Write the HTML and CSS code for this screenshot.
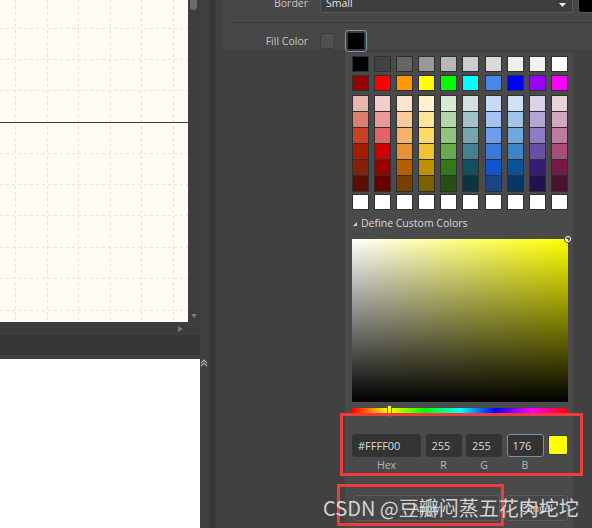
FILE: index.html
```html
<!DOCTYPE html>
<html>
<head>
<meta charset="utf-8">
<link rel="stylesheet" href="styles.css">
</head>
<body>
<div class="app">
  <div class="left">
    <div class="canvas-row">
      <svg class="canvas" width="188" height="322" viewBox="0 0 188 322">
        <rect width="188" height="322" fill="#fffcf6"/>
        <g stroke="#e9e4d9" stroke-width="1" stroke-dasharray="3 3">
          <line x1="15.5" y1="0" x2="15.5" y2="322"/>
          <line x1="47.5" y1="0" x2="47.5" y2="322"/>
          <line x1="78.5" y1="0" x2="78.5" y2="322"/>
          <line x1="110.5" y1="0" x2="110.5" y2="322"/>
          <line x1="141.5" y1="0" x2="141.5" y2="322"/>
          <line x1="173.5" y1="0" x2="173.5" y2="322"/>
          <line x1="0" y1="28.5" x2="188" y2="28.5"/>
          <line x1="0" y1="59.5" x2="188" y2="59.5"/>
          <line x1="0" y1="90.5" x2="188" y2="90.5"/>
          <line x1="0" y1="153.5" x2="188" y2="153.5"/>
          <line x1="0" y1="184.5" x2="188" y2="184.5"/>
          <line x1="0" y1="215.5" x2="188" y2="215.5"/>
          <line x1="0" y1="247.5" x2="188" y2="247.5"/>
          <line x1="0" y1="278.5" x2="188" y2="278.5"/>
          <line x1="0" y1="310.5" x2="188" y2="310.5"/>
        </g>
        <line x1="0" y1="122.5" x2="188" y2="122.5" stroke="#3c3c3c" stroke-width="1"/>
      </svg>
      <div class="vscroll">
        <div class="thumb"></div>
        <div class="arrow-down"></div>
      </div>
    </div>
    <div class="hscroll"><span class="arrow-right"></span></div>
    <div class="tabbar"></div>
    <div class="doc"></div>
  </div>
  <div class="collapse-strip">
    <svg class="chev" width="8" height="8" viewBox="0 0 8 8">
      <polyline points="1,4 4,1 7,4" fill="none" stroke="#a8a8a8" stroke-width="1.2"/>
      <polyline points="1,7 4,4 7,7" fill="none" stroke="#a8a8a8" stroke-width="1.2"/>
    </svg>
  </div>
  <div class="splitter"></div>
  <div class="panel">
    <div class="props">
      <div class="prop-row border-row">
        <span class="label">Border</span>
        <div class="dropdown">
          <span>Small</span>
          <svg class="dd-arrow" width="7" height="4" viewBox="0 0 7 4"><polygon points="0,0 7,0 3.5,4" fill="#f0f0f0"/></svg>
        </div>
        <div class="border-swatch"></div>
      </div>
      <div class="sep"></div>
      <div class="prop-row fill-row">
        <span class="label">Fill Color</span>
        <div class="swatch-empty"></div>
        <div class="swatch-selected"><div class="inner"></div></div>
      </div>
    </div>
  </div>
</div>

<div class="picker">
  <div class="sw-row r1">
    <div class="sw" style="background:#000000"></div>
    <div class="sw" style="background:#434343"></div>
    <div class="sw" style="background:#666666"></div>
    <div class="sw" style="background:#999999"></div>
    <div class="sw" style="background:#b7b7b7"></div>
    <div class="sw" style="background:#cccccc"></div>
    <div class="sw" style="background:#d9d9d9"></div>
    <div class="sw" style="background:#efefef"></div>
    <div class="sw" style="background:#f3f3f3"></div>
    <div class="sw" style="background:#ffffff"></div>
  </div>
  <div class="sw-row r2">
    <div class="sw" style="background:#990000"></div>
    <div class="sw" style="background:#ff0000"></div>
    <div class="sw" style="background:#ff9900"></div>
    <div class="sw" style="background:#ffff00"></div>
    <div class="sw" style="background:#00ff00"></div>
    <div class="sw" style="background:#00ffff"></div>
    <div class="sw" style="background:#4a86e8"></div>
    <div class="sw" style="background:#0000ff"></div>
    <div class="sw" style="background:#9900ff"></div>
    <div class="sw" style="background:#ff00ff"></div>
  </div>
  <div class="sw-row shades">
    <div class="col"><i style="background:#e6b8af"></i><i style="background:#dd7e6b"></i><i style="background:#cc4125"></i><i style="background:#a61c00"></i><i style="background:#85200c"></i><i style="background:#5b0f00"></i></div>
    <div class="col"><i style="background:#f4cccc"></i><i style="background:#ea9999"></i><i style="background:#e06666"></i><i style="background:#cc0000"></i><i style="background:#990000"></i><i style="background:#660000"></i></div>
    <div class="col"><i style="background:#fce5cd"></i><i style="background:#f9cb9c"></i><i style="background:#f6b26b"></i><i style="background:#e69138"></i><i style="background:#b45f06"></i><i style="background:#783f04"></i></div>
    <div class="col"><i style="background:#fff2cc"></i><i style="background:#ffe599"></i><i style="background:#ffd966"></i><i style="background:#f1c232"></i><i style="background:#bf9000"></i><i style="background:#7f6000"></i></div>
    <div class="col"><i style="background:#d9ead3"></i><i style="background:#b6d7a8"></i><i style="background:#93c47d"></i><i style="background:#6aa84f"></i><i style="background:#38761d"></i><i style="background:#274e13"></i></div>
    <div class="col"><i style="background:#d0e0e3"></i><i style="background:#a2c4c9"></i><i style="background:#76a5af"></i><i style="background:#45818e"></i><i style="background:#134f5c"></i><i style="background:#0c343d"></i></div>
    <div class="col"><i style="background:#c9daf8"></i><i style="background:#a4c2f4"></i><i style="background:#6d9eeb"></i><i style="background:#3c78d8"></i><i style="background:#1155cc"></i><i style="background:#1c4587"></i></div>
    <div class="col"><i style="background:#cfe2f3"></i><i style="background:#9fc5e8"></i><i style="background:#6fa8dc"></i><i style="background:#3d85c6"></i><i style="background:#0b5394"></i><i style="background:#073763"></i></div>
    <div class="col"><i style="background:#d9d2e9"></i><i style="background:#b4a7d6"></i><i style="background:#8e7cc3"></i><i style="background:#674ea7"></i><i style="background:#351c75"></i><i style="background:#20124d"></i></div>
    <div class="col"><i style="background:#ead1dc"></i><i style="background:#d5a6bd"></i><i style="background:#c27ba0"></i><i style="background:#a64d79"></i><i style="background:#741b47"></i><i style="background:#4c1130"></i></div>
  </div>
  <div class="sw-row r-last">
    <div class="sw white"></div><div class="sw white"></div><div class="sw white"></div><div class="sw white"></div><div class="sw white"></div>
    <div class="sw white"></div><div class="sw white"></div><div class="sw white"></div><div class="sw white"></div><div class="sw white"></div>
  </div>
  <div class="custom-head">
    <svg class="tri" width="4" height="4" viewBox="0 0 4 4"><polygon points="4,0 4,4 0,4" fill="#d0d0d0"/></svg>
    <span>Define Custom Colors</span>
  </div>
  <div class="sv-box">
    <span class="sv-marker"></span>
  </div>
  <div class="hue">
    <span class="hue-thumb"></span>
  </div>
  <div class="fields">
    <div class="field">
      <div class="input hex">#FFFF00</div>
      <span class="flabel">Hex</span>
    </div>
    <div class="field">
      <div class="input num">255</div>
      <span class="flabel">R</span>
    </div>
    <div class="field">
      <div class="input num g">255</div>
      <span class="flabel">G</span>
    </div>
    <div class="field">
      <div class="input num b focus">176</div>
      <span class="flabel">B</span>
    </div>
    <div class="preview"></div>
  </div>
  <div class="buttons">
    <div class="btn wide">Apply</div>
    <div class="btn narrow">Cancel</div>
  </div>
</div>

<div class="annot box1"></div>
<div class="annot box2"></div>
<div class="watermark">CSDN @豆瓣闷蒸五花肉坨坨</div>
</body>
</html>
```

FILE: styles.css
```css
* { box-sizing: border-box; }

html, body {
  margin: 0;
  padding: 0;
}

body {
  width: 592px;
  height: 528px;
  overflow: hidden;
  position: relative;
  background: #414141;
  font-family: "Open Sans", "Noto Sans", sans-serif;
  font-size: 10.5px;
  color: #d6d6d6;
}

.app {
  display: flex;
  width: 592px;
  height: 528px;
}

/* ---------- left ---------- */
.left {
  flex: none;
  width: 200px;
  display: flex;
  flex-direction: column;
  background: #3d3d3d;
}

.canvas-row {
  display: flex;
  height: 322px;
  flex: none;
}

.canvas {
  display: block;
  flex: none;
  width: 188px;
  height: 322px;
}

.vscroll {
  flex: none;
  width: 12px;
  background: #3d3d3d;
  display: flex;
  flex-direction: column;
}

.thumb {
  margin-left: 2px;
  width: 7px;
  height: 10px;
  background: #6b6b6b;
  border-radius: 0 0 3px 3px;
}

.arrow-down {
  margin-top: auto;
  margin-left: 3px;
  margin-bottom: 4px;
  width: 0;
  height: 0;
  border-left: 3px solid transparent;
  border-right: 3px solid transparent;
  border-top: 4px solid #7c7c7c;
}

.hscroll {
  flex: none;
  height: 13px;
  display: flex;
  align-items: center;
  justify-content: flex-end;
  padding-right: 17px;
}

.arrow-right {
  width: 0;
  height: 0;
  border-top: 3px solid transparent;
  border-bottom: 3px solid transparent;
  border-left: 5px solid #777777;
}

.tabbar {
  flex: none;
  height: 20px;
  background: #363636;
}

.doc {
  margin-top: 4px;
  flex: 1;
  background: #ffffff;
}

.collapse-strip {
  flex: none;
  width: 10px;
  background: #3f3f3f;
  padding-top: 359px;
}

.chev {
  display: block;
  margin-left: 0;
}

.splitter {
  flex: none;
  width: 5px;
  background: #373737;
}

/* ---------- right panel ---------- */
.panel {
  flex: 1;
  min-width: 0;
  background: #414141;
}

.props {
  margin-left: 8px;
  height: 57px;
  background: #474747;
}

.prop-row {
  display: flex;
  align-items: center;
}

.label {
  flex: none;
  width: 85px;
  margin-right: 12px;
  text-align: right;
  color: #c6c6c6;
  white-space: nowrap;
}

.border-row {
  margin-top: -8px;
  height: 21px;
}

.dropdown {
  flex: none;
  width: 253px;
  height: 21px;
  border: 1px solid #5b5b5b;
  border-radius: 3px;
  background: #3e3e3e;
  display: flex;
  align-items: center;
  padding-left: 5px;
  color: #e4e4e4;
}

.dd-arrow {
  margin-left: auto;
  margin-right: 6px;
  margin-top: 4px;
}

.border-swatch {
  margin-left: 5px;
  width: 22px;
  height: 21px;
  flex: none;
  border: 1px solid #5b5b5b;
  border-radius: 3px;
  background: #000;
}

.sep {
  margin-top: 9px;
  margin-left: 7px;
  height: 1px;
  background: #383838;
}

.fill-row {
  margin-top: 7px;
  height: 22px;
}

.swatch-empty {
  flex: none;
  width: 15px;
  height: 16px;
  background: #4f4f4f;
  border: 1px solid #3a3a3a;
  border-radius: 3px;
  margin-right: 10px;
}

.swatch-selected {
  flex: none;
  width: 22px;
  height: 22px;
  border: 1px solid #7f97ad;
  border-radius: 3px;
  padding: 2px;
  background: #3a3a3a;
}

.swatch-selected .inner {
  width: 100%;
  height: 100%;
  background: #000;
  border-radius: 1px;
}

/* ---------- picker popup ---------- */
.picker {
  position: absolute;
  left: 345px;
  top: 53px;
  width: 228px;
  height: 475px;
  background: #4a4a4a;
  padding: 4px 5px 0 7px;
}

.sw-row {
  display: grid;
  grid-template-columns: repeat(10, 15px);
  column-gap: 7.1px;
  margin-left: 1px;
}

.sw {
  width: 15px;
  height: 14px;
  box-shadow: 0 0 0 1px #303030;
}

.sw.white { background: #ffffff; }

.r2 { margin-top: 5px; }

.shades { margin-top: 6px; }

.col {
  display: flex;
  flex-direction: column;
  gap: 1px;
  background: #303030;
  box-shadow: 0 0 0 1px #303030;
}

.col i {
  display: block;
  width: 15px;
  height: 15px;
}

.r-last { margin-top: 4px; }

.custom-head {
  margin-top: 4px;
  height: 20px;
  display: flex;
  align-items: center;
  padding-left: 1px;
  color: #d8d8d8;
}

.tri {
  margin-right: 4px;
  margin-top: 1px;
}

.sv-box {
  position: relative;
  margin-top: 6px;
  width: 216px;
  height: 163px;
  background:
    linear-gradient(to top, #000000, rgba(0,0,0,0)),
    linear-gradient(to right, #ffffff, #ffff00);
}

.sv-marker {
  position: absolute;
  right: -3px;
  top: -3px;
  width: 6px;
  height: 6px;
  border-radius: 50%;
  border: 1px solid #ffffff;
  box-shadow: 0 0 0 1px #555;
}

.hue {
  position: relative;
  margin-top: 6px;
  width: 216px;
  height: 5px;
  background: linear-gradient(to right, #ff0000, #ffff00, #00ff00, #00ffff, #0000ff, #ff00ff, #ff0000);
}

.hue-thumb {
  position: absolute;
  left: 35px;
  top: -3px;
  width: 5px;
  height: 12px;
  background: #ffff00;
  border: 1px solid #5a5a2a;
}

.fields {
  margin-top: 21px;
  display: flex;
  gap: 4.5px;
}

.field {
  display: flex;
  flex-direction: column;
  align-items: center;
}

.input {
  height: 23px;
  background: #333333;
  border-radius: 3px;
  border: 1px solid #333333;
  color: #dcdcdc;
  font-size: 11px;
  display: flex;
  align-items: center;
  padding-left: 5px;
}

.hex { width: 69px; }
.num { width: 36px; padding-left: 5px; }
.num.b { width: 37px; }
.focus { border-color: #7890a6; }

.flabel {
  margin-top: 1px;
  color: #b4b4b4;
  line-height: 14px;
}

.preview {
  margin-top: 1px;
  width: 20px;
  height: 20px;
  background: #ffff00;
  border: 1px solid #3a3a3a;
  border-radius: 2px;
}

.buttons {
  margin-top: 23px;
  margin-left: 1px;
  display: flex;
  gap: 5.5px;
}

.btn {
  height: 26px;
  background: #474747;
  border: 1px solid #5e5e5e;
  border-radius: 3px;
  display: flex;
  align-items: center;
  justify-content: center;
  color: #d8d8d8;
}

.btn.wide { width: 147px; }
.btn.narrow { width: 63px; }

/* ---------- annotations ---------- */
.annot {
  position: absolute;
  border: 3px solid #ef3b3b;
}

.box1 {
  left: 340px;
  top: 413px;
  width: 243px;
  height: 63px;
}

.box2 {
  left: 337px;
  top: 484px;
  width: 167px;
  height: 42px;
}

.watermark {
  position: absolute;
  left: 323px;
  top: 496px;
  font-family: "Noto Sans CJK SC", "Liberation Sans", sans-serif;
  font-size: 20px;
  line-height: 24px;
  color: rgba(232, 232, 232, 0.88);
  white-space: nowrap;
}
```
